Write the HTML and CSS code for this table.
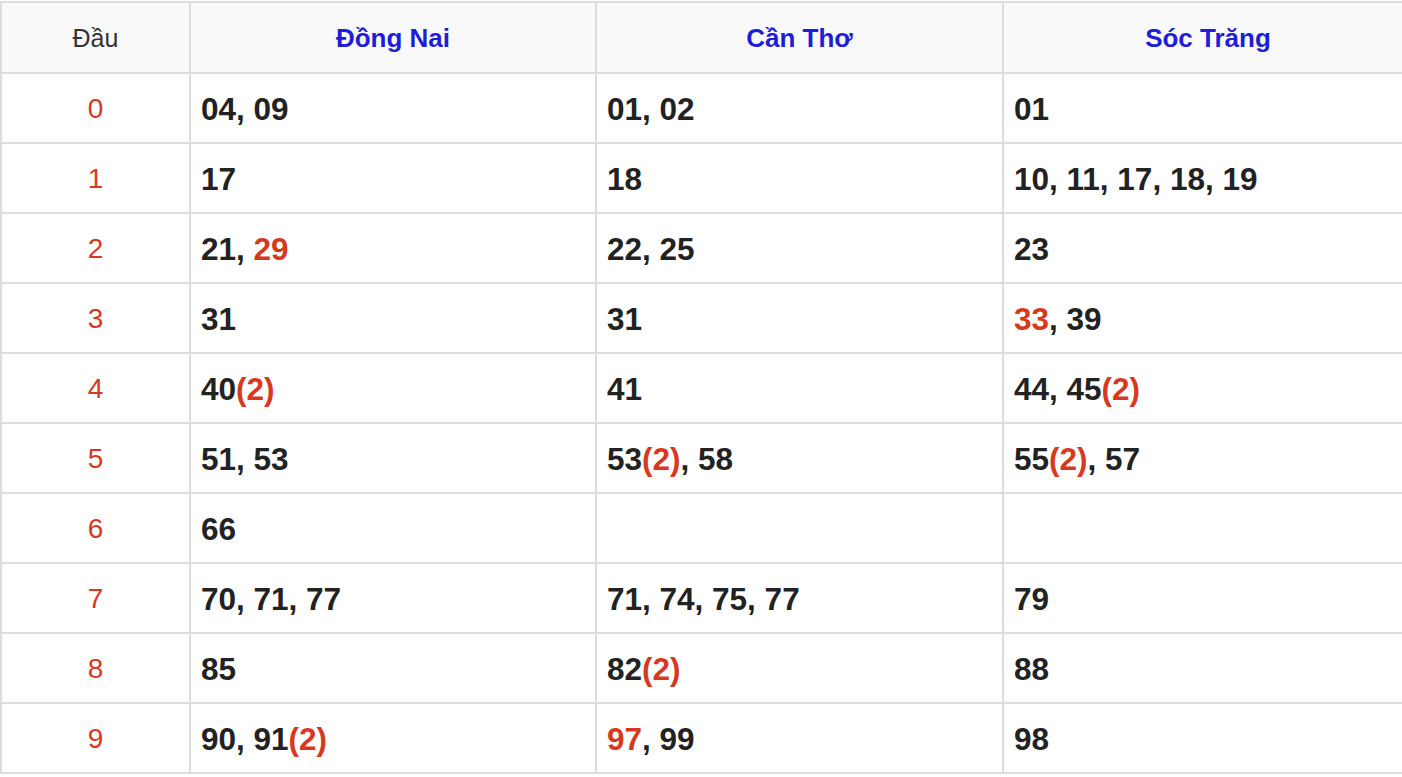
FILE: index.html
```html
<!DOCTYPE html>
<html lang="vi">
<head>
<meta charset="utf-8">
<title>Thống kê đầu</title>
<link rel="stylesheet" href="styles.css">
</head>
<body>
<table class="tk">
  <colgroup>
    <col class="c-dau">
    <col class="c-prov">
    <col class="c-prov2">
    <col class="c-last">
  </colgroup>
  <thead>
    <tr>
      <th class="dau-h">Đầu</th>
      <th class="prov">Đồng Nai</th>
      <th class="prov">Cần Thơ</th>
      <th class="prov">Sóc Trăng</th>
    </tr>
  </thead>
  <tbody>
    <tr><td class="dau">0</td><td class="num">04, 09</td><td class="num">01, 02</td><td class="num">01</td></tr>
    <tr><td class="dau">1</td><td class="num">17</td><td class="num">18</td><td class="num">10, 11, 17, 18, 19</td></tr>
    <tr><td class="dau">2</td><td class="num">21, <span class="hl">29</span></td><td class="num">22, 25</td><td class="num">23</td></tr>
    <tr><td class="dau">3</td><td class="num">31</td><td class="num">31</td><td class="num"><span class="hl">33</span>, 39</td></tr>
    <tr><td class="dau">4</td><td class="num">40<span class="hl">(2)</span></td><td class="num">41</td><td class="num">44, 45<span class="hl">(2)</span></td></tr>
    <tr><td class="dau">5</td><td class="num">51, 53</td><td class="num">53<span class="hl">(2)</span>, 58</td><td class="num">55<span class="hl">(2)</span>, 57</td></tr>
    <tr><td class="dau">6</td><td class="num">66</td><td class="num"></td><td class="num"></td></tr>
    <tr><td class="dau">7</td><td class="num">70, 71, 77</td><td class="num">71, 74, 75, 77</td><td class="num">79</td></tr>
    <tr><td class="dau">8</td><td class="num">85</td><td class="num">82<span class="hl">(2)</span></td><td class="num">88</td></tr>
    <tr><td class="dau">9</td><td class="num">90, 91<span class="hl">(2)</span></td><td class="num"><span class="hl">97</span>, 99</td><td class="num">98</td></tr>
  </tbody>
</table>
</body>
</html>
```

FILE: styles.css
```css
html, body {
  margin: 0;
  padding: 0;
  background: #ffffff;
}
body {
  padding-top: 1px;
  font-family: "Liberation Sans", Arial, sans-serif;
  overflow: hidden;
}
.tk {
  border-collapse: collapse;
  table-layout: fixed;
  width: 1412px;
}
.c-dau { width: 189px; }
.c-prov { width: 406px; }
.c-prov2 { width: 407px; }
.c-last { width: 410px; }
.tk th, .tk td {
  border: 2px solid #dddddd;
  height: 70px;
  padding: 2px 10px 0 10px;
  vertical-align: middle;
  box-sizing: border-box;
}
.tk thead th {
  background: #f9f9f9;
  height: 71px;
}
.dau-h {
  font-weight: normal;
  font-size: 25px;
  color: #333333;
  text-align: center;
}
.prov {
  font-weight: bold;
  font-size: 26px;
  color: #1e1ed8;
  text-align: center;
}
.dau {
  text-align: center;
  font-size: 28px;
  color: #d7391f;
}
.num {
  text-align: left;
  font-weight: bold;
  font-size: 31.5px;
  color: #222222;
}
.hl {
  color: #d7391f;
}
```
